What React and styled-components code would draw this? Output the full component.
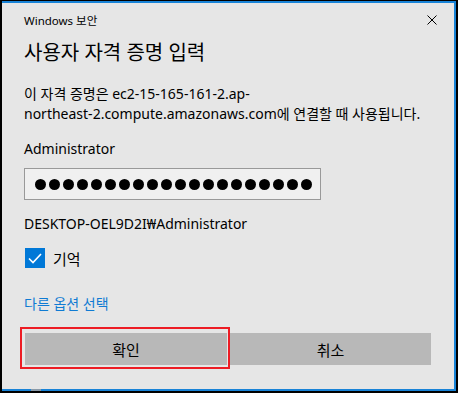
import React from "react";
import styled, { createGlobalStyle } from "styled-components";

const Global = createGlobalStyle`
  html, body { margin: 0; padding: 0; background: #000; }
  body { font-family: "Noto Sans", "Noto Sans CJK KR", sans-serif; }
`;

const Frame = styled.div`
  position: relative;
  width: 458px;
  height: 393px;
  box-sizing: border-box;
  padding: 1px 2px 2px 2px;
  background: #000;
`;

const Window = styled.div`
  height: 100%;
  box-sizing: border-box;
  background: #e6e6e6;
  border-top: 2px solid #1883d7;
  border-right: 2px solid #1883d7;
  border-bottom: 2px solid #1883d7;
  padding: 8px 23px 0 22px;
  display: flex;
  flex-direction: column;
  color: #000;
`;

const Header = styled.div`
  display: flex;
  align-items: center;
  justify-content: space-between;
  height: 18px;
  font-size: 11.5px;
`;

const Close = styled.button`
  border: 0;
  background: none;
  padding: 0;
  margin-right: -6px;
  width: 10px;
  height: 10px;
  display: flex;
`;

const Title = styled.h1`
  margin: 10px 0 0;
  font-size: 20px;
  font-weight: 400;
  line-height: 28px;
`;

const Text = styled.p`
  margin: ${(p) => p.$mt}px 0 0;
  font-size: 14px;
  line-height: 20px;
  white-space: nowrap;
  color: ${(p) => (p.$link ? "#0f7bd3" : "#000")};
`;

const PasswordBox = styled.div`
  margin-top: 9px;
  width: 297px;
  height: 32px;
  box-sizing: border-box;
  border: 1px solid #999;
  background: #f0f0f0;
  display: flex;
  align-items: center;
  gap: 3px;
  padding-left: 10px;
`;

const Dot = styled.span`
  width: 11px;
  height: 11px;
  border-radius: 50%;
  background: #000;
`;

const CheckRow = styled.label`
  margin-top: 14px;
  display: flex;
  align-items: center;
  gap: 8px;
  height: 20px;
  font-size: 15px;
  padding-left: 1px;
`;

const CheckBox = styled.span`
  width: 20px;
  height: 20px;
  background: #0078d7;
  display: flex;
  align-items: center;
  justify-content: center;
`;

const ButtonRow = styled.div`
  position: relative;
  margin: 19px 0 0 1px;
  display: grid;
  grid-template-columns: 202px 1fr;
  gap: 3px;
`;

const Button = styled.button`
  position: relative;
  height: 32px;
  border: 0;
  background: #b8b8b8;
  font-family: inherit;
  font-size: 15px;
  color: #000;
  padding: 0;
`;

const Highlight = styled.span`
  position: absolute;
  left: -5px;
  right: -3px;
  top: -6px;
  bottom: -4px;
  border: 2px solid #ed1c24;
  pointer-events: none;
`;

const TaskbarBit = styled.span`
  position: absolute;
  left: 31px;
  bottom: 2px;
  width: 10px;
  height: 2px;
  background: #8a9aa8;
`;

export default function App() {
  return (
    <Frame>
      <Global />
      <Window>
        <Header>
          <span>Windows 보안</span>
          <Close aria-label="닫기">
            <svg width="10" height="10" viewBox="0 0 10 10">
              <path d="M0.5 0.5 L9.5 9.5 M9.5 0.5 L0.5 9.5" stroke="#000" strokeWidth="1" />
            </svg>
          </Close>
        </Header>
        <Title>사용자 자격 증명 입력</Title>
        <Text $mt={17}>
          이 자격 증명은 ec2-15-165-161-2.ap-
          <br />
          northeast-2.compute.amazonaws.com에 연결할 때 사용됩니다.
        </Text>
        <Text $mt={15}>Administrator</Text>
        <PasswordBox>
          {Array.from({ length: 20 }, (_, i) => (
            <Dot key={i} />
          ))}
        </PasswordBox>
        <Text $mt={14}>DESKTOP-OEL9D2I₩Administrator</Text>
        <CheckRow>
          <CheckBox>
            <svg width="14" height="11" viewBox="0 0 14 11">
              <path d="M1 5.5 L5 9.5 L13 1" stroke="#fff" strokeWidth="1.6" fill="none" />
            </svg>
          </CheckBox>
          기억
        </CheckRow>
        <Text $mt={26} $link>다른 옵션 선택</Text>
        <ButtonRow>
          <Button>
            확인
            <Highlight />
          </Button>
          <Button>취소</Button>
        </ButtonRow>
      </Window>
      <TaskbarBit />
    </Frame>
  );
}
